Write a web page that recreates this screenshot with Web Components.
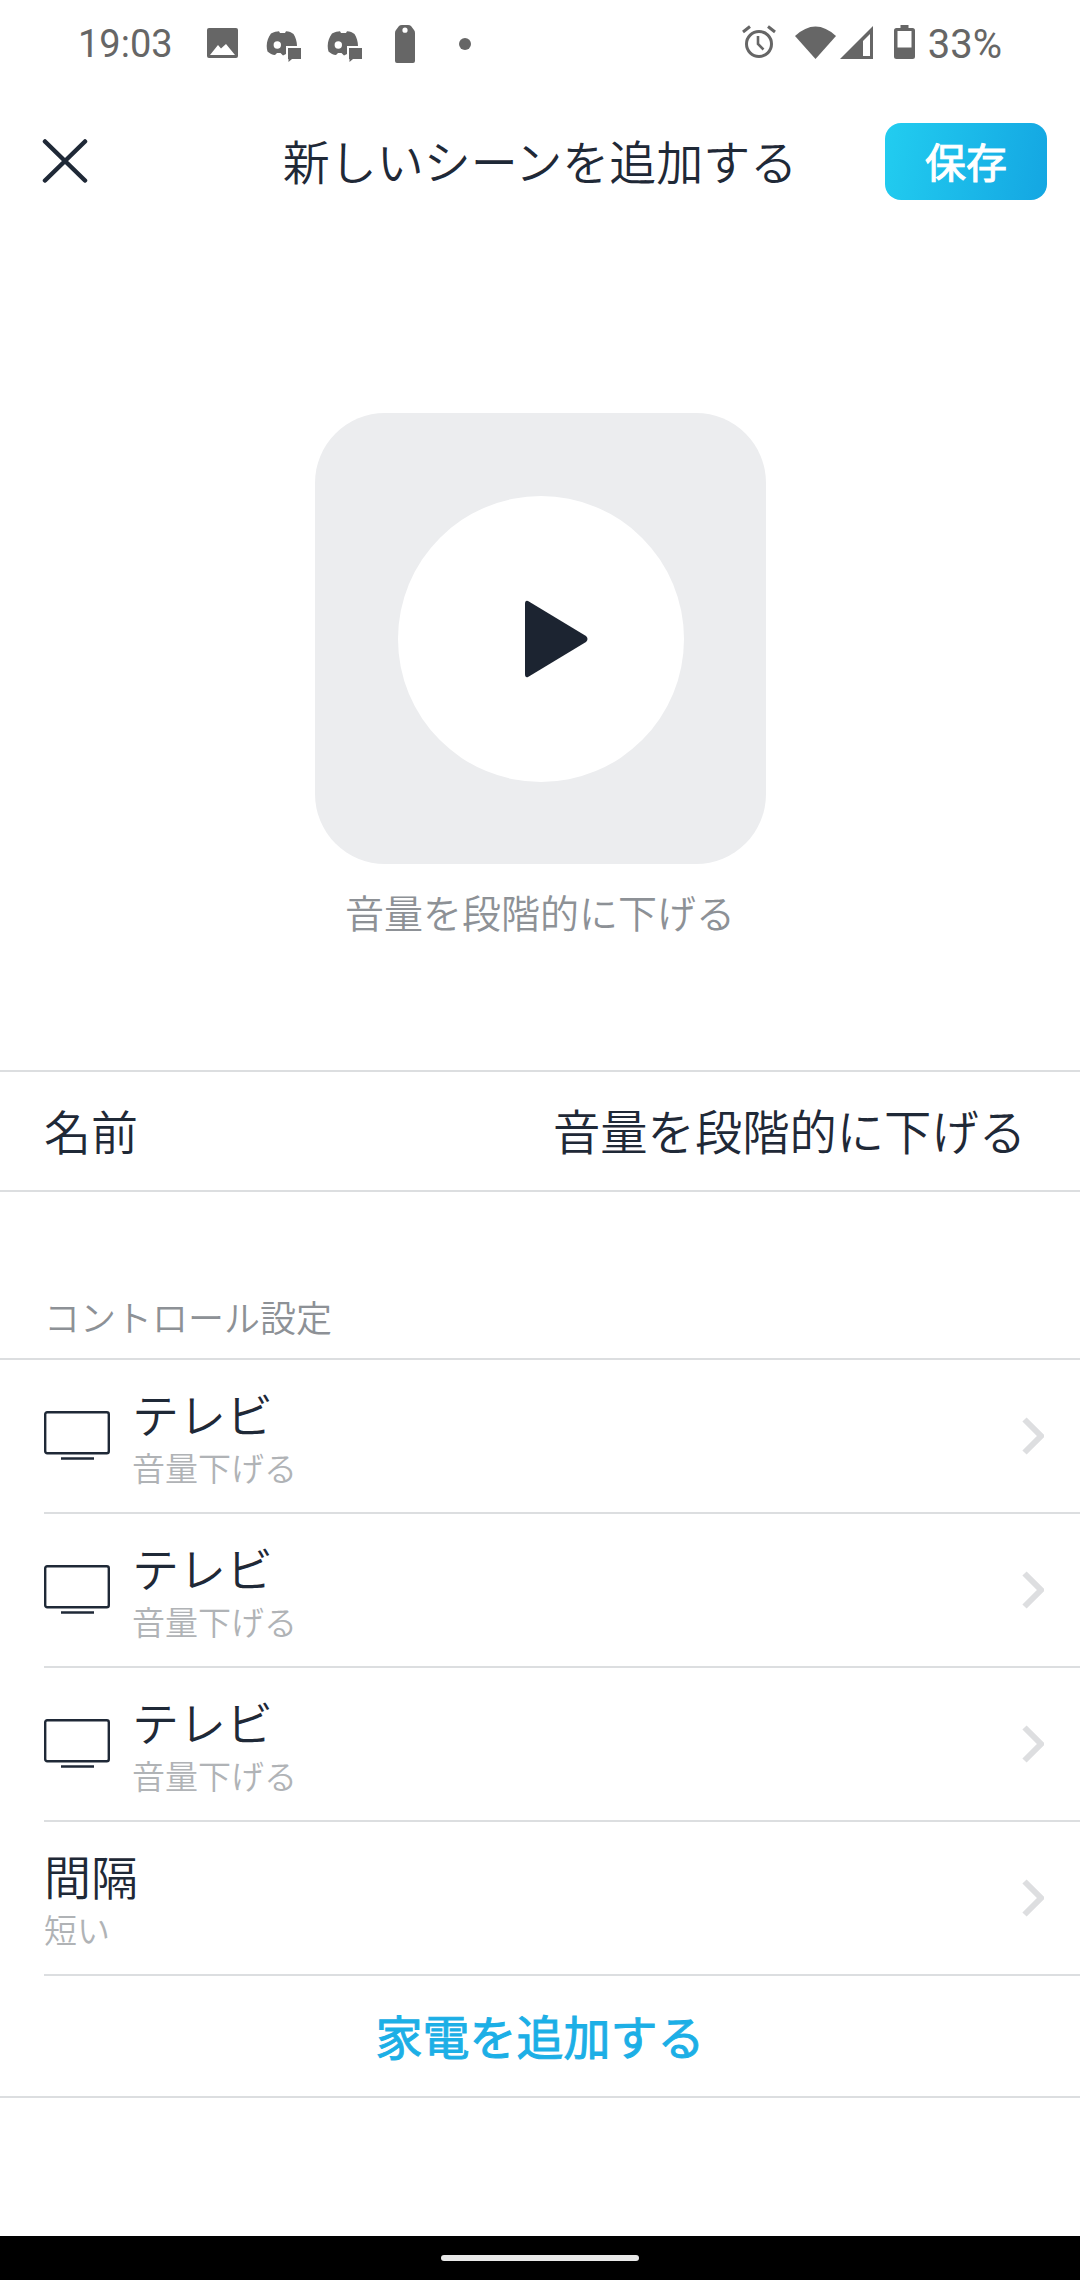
<!DOCTYPE html>
<html lang="ja">
<head>
<meta charset="utf-8">
<title>新しいシーンを追加する</title>
<style>
    html, body { margin: 0; background: #fff; }
    body {
        width: 1080px;
        height: 2280px;
        display: flex;
        flex-direction: column;
        font-family: "Noto Sans CJK JP", "Noto Sans", sans-serif;
        font-weight: 350;
        color: #1f2937;
        overflow: hidden;
    }
    .spacer { flex: 1; }
</style>
</head>
<body>
<status-bar></status-bar>
<app-header>新しいシーンを追加する</app-header>
<scene-preview>音量を段階的に下げる</scene-preview>
<name-row label="名前">音量を段階的に下げる</name-row>
<section-label>コントロール設定</section-label>
<device-row icon title="テレビ">音量下げる</device-row>
<device-row icon title="テレビ">音量下げる</device-row>
<device-row icon title="テレビ">音量下げる</device-row>
<device-row title="間隔">短い</device-row>
<add-row>家電を追加する</add-row>
<div class="spacer"></div>
<nav-bar></nav-bar>

<script>
class StatusBar extends HTMLElement {
    constructor() {
        super();
        this.shadowDOM = this.attachShadow({ mode: 'open' });
    }

    connectedCallback() {
        const chat = `
            <svg class="chat" width="35" height="31" viewBox="0 0 35 31" fill="#666">
                <path fill-rule="evenodd" d="M5 2.5 C8 1 11 .3 13 .3 L14 2 H19 L20 .3 C23 .5 25.5 1.5 27.5 3 C29.5 6 31 10.5 31 15 H20 V23 L17 24.5 L14.5 22 H11 L9 24 C6.5 23.8 3.5 22.5 1.5 20.5 C-.5 14 1.5 7 5 2.5 Z M11.3 10.3 A3.7 3.7 0 1 0 11.3 17.7 A3.7 3.7 0 1 0 11.3 10.3 Z"/>
                <path d="M22 17 H35 V28 H26 L22.5 31 V28 H22 Z"/>
            </svg>`;
        this.shadowDOM.innerHTML = `
            <style>
                :host {
                    display: flex;
                    align-items: center;
                    height: 88px;
                    padding: 0 78px 0 78px;
                    font: 38px Roboto, sans-serif;
                    color: #666;
                }
                .time { width: 129px; }
                svg { display: block; flex: none; }
                .image { margin: 0 28px 2px 0; }
                .chat { margin-top: 5px; }
                .chat + .chat { margin-left: 26px; }
                .tag { margin: 0 0 1px 33px; }
                .dot { margin: 0 0 1px 44px; }
                .right { margin-left: auto; display: flex; align-items: center; }
                .alarm { margin-bottom: 5px; }
                .wifi { margin: 0 0 3px 19px; }
                .signal { margin: 0 0 3px 4px; }
                .battery { margin: 0 0 4px 21px; }
                .level { margin-left: 13px; font-size: 40px; }
            </style>
            <span class="time">19:03</span>
            <svg class="image" width="31" height="30" viewBox="0 0 31 30">
                <rect width="31" height="30" rx="2" fill="#666"/>
                <path d="M3 27 L11 17 L14 20.5 L19 16 L28 27 Z" fill="#fff"/>
            </svg>
            ${chat}${chat}
            <svg class="tag" width="20" height="38" viewBox="0 0 20 38">
                <path d="M4 1 Q5 0 7 0 H13 Q15 0 16 1 L19 5 Q20 6 20 8 V36 Q20 38 18 38 H2 Q0 38 0 36 V8 Q0 6 1 5 Z M10 2.6 A2.6 2.6 0 1 0 10 7.8 A2.6 2.6 0 1 0 10 2.6 Z" fill="#666" fill-rule="evenodd"/>
            </svg>
            <svg class="dot" width="12" height="12" viewBox="0 0 12 12"><circle cx="6" cy="6" r="6" fill="#666"/></svg>
            <div class="right">
                <svg class="alarm" width="34" height="33" viewBox="0 0 34 33" fill="none" stroke="#666">
                    <circle cx="17" cy="19" r="12.5" stroke-width="3"/>
                    <path d="M16 11 V19 L21.5 24.5" stroke-width="2.6"/>
                    <path d="M1 7 L8 1.5 M33 7 L26 1.5" stroke-width="3"/>
                </svg>
                <svg class="wifi" width="41" height="33" viewBox="0 0 41 33"><path d="M0 10 Q20.5 -9 41 10 L20.5 33 Z" fill="#666"/></svg>
                <svg class="signal" width="33" height="33" viewBox="0 0 33 33">
                    <path d="M0 33 L33 0 V33 Z" fill="#666"/>
                    <path d="M23 30 H30 V8 L23 15 Z" fill="#fff"/>
                </svg>
                <svg class="battery" width="21" height="34" viewBox="0 0 21 34">
                    <path d="M6.5 0 H14.5 V3 H18.5 Q21 3 21 5.5 V31.5 Q21 34 18.5 34 H2.5 Q0 34 0 31.5 V5.5 Q0 3 2.5 3 H6.5 Z" fill="#666"/>
                    <rect x="3.5" y="6" width="14" height="16.5" fill="#fff"/>
                </svg>
                <span class="level">33%</span>
            </div>
        `;
    }
}

class AppHeader extends HTMLElement {
    constructor() {
        super();
        this.shadowDOM = this.attachShadow({ mode: 'open' });
    }

    connectedCallback() {
        this.shadowDOM.innerHTML = `
            <style>
                :host {
                    display: grid;
                    grid-template-columns: 1fr auto 1fr;
                    align-items: center;
                    height: 146px;
                    padding: 0 33px;
                }
                .title { font-size: 47px; line-height: 64px; margin-bottom: 2px; color: #1f2937; }
                .close { display: block; margin-left: 9px; }
                .save {
                    justify-self: end;
                    width: 162px;
                    height: 77px;
                    border-radius: 16px;
                    background: linear-gradient(100deg, #22cdf0, #14a6e2);
                    color: #fff;
                    font-size: 41px;
                    font-weight: 400;
                    -webkit-text-stroke: 1px #fff;
                    line-height: 75px;
                    text-align: center;
                }
            </style>
            <svg class="close" width="46" height="44" viewBox="0 0 46 44">
                <path d="M3 2.5 L43 41.5 M43 2.5 L3 41.5" stroke="#1f2937" stroke-width="4.5" stroke-linecap="round"/>
            </svg>
            <div class="title"><slot></slot></div>
            <div class="save">保存</div>
        `;
    }
}

class ScenePreview extends HTMLElement {
    constructor() {
        super();
        this.shadowDOM = this.attachShadow({ mode: 'open' });
    }

    connectedCallback() {
        this.shadowDOM.innerHTML = `
            <style>
                :host {
                    display: flex;
                    flex-direction: column;
                    align-items: center;
                    height: 838px;
                    padding-top: 179px;
                    box-sizing: border-box;
                    border-bottom: 2px solid #dcdee0;
                }
                .tile {
                    width: 451px;
                    height: 451px;
                    border-radius: 70px;
                    background: #ecedef;
                    display: flex;
                    align-items: center;
                    justify-content: center;
                }
                .circle {
                    width: 286px;
                    height: 286px;
                    margin-left: 2px;
                    border-radius: 50%;
                    background: #fff;
                    display: flex;
                    align-items: center;
                    justify-content: center;
                }
                svg { display: block; margin: 0 0 0 32px; }
                .caption {
                    margin-top: 20px;
                    font-size: 39px;
                    line-height: 54px;
                    color: #8d9196;
                }
            </style>
            <div class="tile">
                <div class="circle">
                    <svg width="66" height="82" viewBox="0 0 66 82">
                        <path d="M4 3 L62 38 Q65 41 62 44 L4 79 Q1 80 1 76 V6 Q1 2 4 3 Z" fill="#1c2431"/>
                    </svg>
                </div>
            </div>
            <div class="caption"><slot></slot></div>
        `;
    }
}

class NameRow extends HTMLElement {
    constructor() {
        super();
        this.shadowDOM = this.attachShadow({ mode: 'open' });
    }

    connectedCallback() {
        this.shadowDOM.innerHTML = `
            <style>
                :host {
                    display: flex;
                    align-items: center;
                    justify-content: space-between;
                    height: 114px;
                    padding: 0 54px 4px 44px;
                    border-bottom: 2px solid #dcdee0;
                    font-size: 47px;
                    color: #1f2937;
                }
                .value { font-size: 47.3px; }
            </style>
            <span>${this.getAttribute('label')}</span>
            <span class="value"><slot></slot></span>
        `;
    }
}

class SectionLabel extends HTMLElement {
    constructor() {
        super();
        this.shadowDOM = this.attachShadow({ mode: 'open' });
    }

    connectedCallback() {
        this.shadowDOM.innerHTML = `
            <style>
                :host {
                    display: flex;
                    align-items: flex-end;
                    box-sizing: border-box;
                    height: 168px;
                    padding: 0 44px 17px;
                    border-bottom: 2px solid #dcdee0;
                    font-size: 36px;
                    line-height: 50px;
                    color: #8d9196;
                }
            </style>
            <slot></slot>
        `;
    }
}

class DeviceRow extends HTMLElement {
    constructor() {
        super();
        this.shadowDOM = this.attachShadow({ mode: 'open' });
    }

    connectedCallback() {
        const icon = this.hasAttribute('icon') ? `
            <svg class="tv" width="66" height="50" viewBox="0 0 66 50" fill="none" stroke="#1f2937">
                <rect x="1.2" y="1.2" width="63.6" height="41" rx="2" stroke-width="2.4"/>
                <path d="M17 47.5 H50" stroke-width="2.6"/>
            </svg>` : '';
        this.shadowDOM.innerHTML = `
            <style>
                :host {
                    display: block;
                    height: 154px;
                    box-sizing: border-box;
                    padding-left: 44px;
                }
                .row {
                    display: flex;
                    align-items: center;
                    height: 154px;
                    box-sizing: border-box;
                    padding-right: 36px;
                    border-bottom: 2px solid #dcdee0;
                }
                .tv { display: block; flex: none; margin: 0 22px 0 0; }
                .text { flex: 1; }
                .name { font-size: 47px; line-height: 56px; color: #1f2937; }
                .sub { margin-top: 5px; font-size: 33px; line-height: 42px; color: #b0b3b6; }
                .chevron { display: block; }
            </style>
            <div class="row">
                ${icon}
                <div class="text">
                    <div class="name">${this.getAttribute('title')}</div>
                    <div class="sub"><slot></slot></div>
                </div>
                <svg class="chevron" width="22" height="38" viewBox="0 0 22 38" fill="none">
                    <path d="M2.5 2.5 L19 19 L2.5 35.5" stroke="#dddee0" stroke-width="6"/>
                </svg>
            </div>
        `;
    }
}

class AddRow extends HTMLElement {
    constructor() {
        super();
        this.shadowDOM = this.attachShadow({ mode: 'open' });
    }

    connectedCallback() {
        this.shadowDOM.innerHTML = `
            <style>
                :host {
                    display: flex;
                    align-items: center;
                    justify-content: center;
                    height: 122px;
                    box-sizing: border-box;
                    padding-bottom: 4px;
                    border-bottom: 2px solid #dcdee0;
                    font-size: 47px;
                    font-weight: 400;
                    -webkit-text-stroke: 1px #1cafe6;
                    color: #1cafe6;
                }
            </style>
            <slot></slot>
        `;
    }
}

class NavBar extends HTMLElement {
    constructor() {
        super();
        this.shadowDOM = this.attachShadow({ mode: 'open' });
    }

    connectedCallback() {
        this.shadowDOM.innerHTML = `
            <style>
                :host {
                    display: flex;
                    align-items: center;
                    justify-content: center;
                    height: 44px;
                    background: #000;
                }
                .handle { width: 198px; height: 6px; border-radius: 3px; background: #e8e8e8; }
            </style>
            <div class="handle"></div>
        `;
    }
}

customElements.define('status-bar', StatusBar);
customElements.define('app-header', AppHeader);
customElements.define('scene-preview', ScenePreview);
customElements.define('name-row', NameRow);
customElements.define('section-label', SectionLabel);
customElements.define('device-row', DeviceRow);
customElements.define('add-row', AddRow);
customElements.define('nav-bar', NavBar);
</script>
</body>
</html>
